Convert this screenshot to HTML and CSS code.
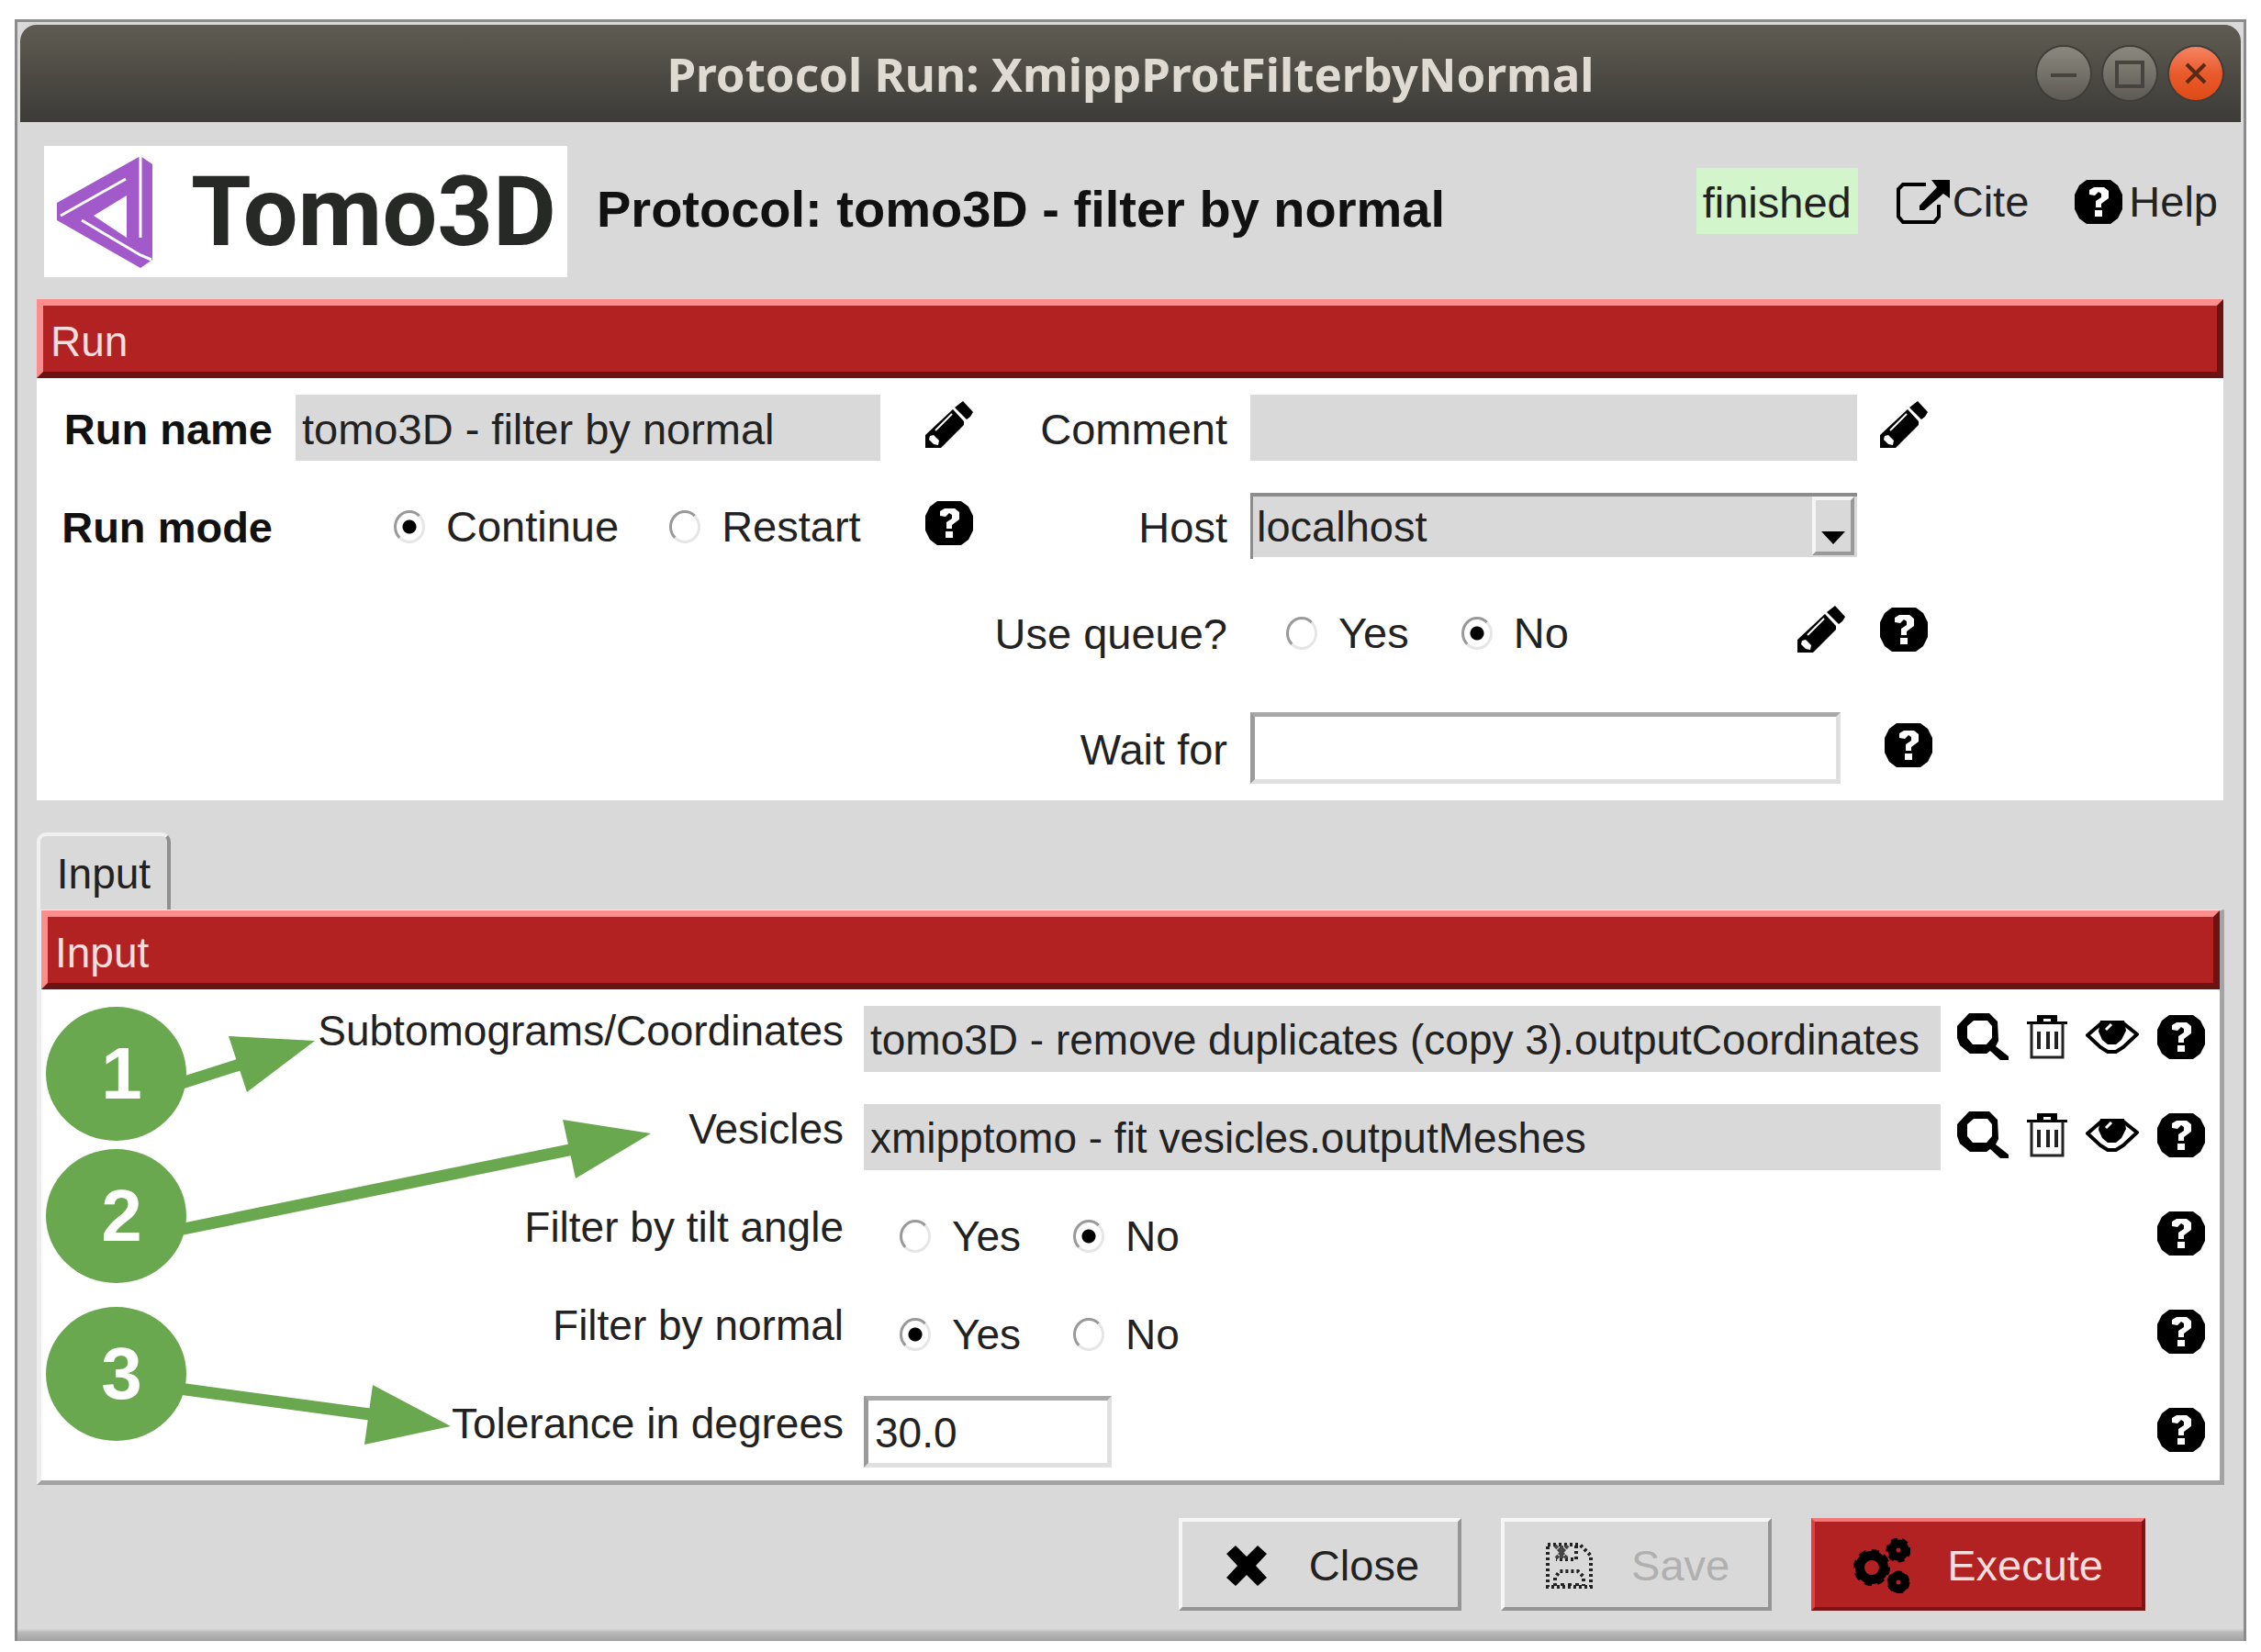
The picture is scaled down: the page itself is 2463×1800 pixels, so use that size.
FILE: index.html
```html
<!DOCTYPE html>
<html lang="en">
<head>
<meta charset="utf-8">
<title>Protocol Run: XmippProtFilterbyNormal</title>
<link rel="stylesheet" href="styles.css">
</head>
<body>
<svg class="sprite" aria-hidden="true">
  <symbol id="i-help" viewBox="0 0 52 48">
    <path d="M13 0h26l8 6 5 10v16l-5 10-8 6H13l-8-6-5-10V16l5-10z" fill="#000"/>
    <path d="M16 16v-5l5-3h11l5 4v8l-8 6v4h-6v-7l6-4v-4l-3-2-4 4z" fill="#fff"/>
    <path d="M22 33h8v7h-8z" fill="#fff"/>
  </symbol>
  <symbol id="i-pencil" viewBox="0 0 52 52">
    <path d="M41 0l11 12-3 5-4 3-13-13z M30 9l12 13v4L17 51H0V37z" fill="#000"/>
    <path d="M5 38l4-1 6 6-1 5-5-1-5-5z" fill="#fff"/>
    <path d="M29 14L11 32" stroke="#fff" stroke-width="2" fill="none"/>
  </symbol>
  <symbol id="i-search" viewBox="0 0 56 52">
    <path d="M13 0h22l9 9 1 21-3 6 14 11v4h-9L36 41l-4 3H14L3 35l-3-8V14z M18 8l-7 6v13l6 7h15l6-7V14l-5-6z" fill="#000" fill-rule="evenodd"/>
  </symbol>
  <symbol id="i-trash" viewBox="0 0 44 48">
    <path d="M11 7V0h22v7z M0 7h44v3H0z" fill="#000"/>
    <path d="M18 4h8v3h-8z" fill="#fff"/>
    <path d="M5 9v37h34V9" fill="none" stroke="#222" stroke-width="3"/>
    <path d="M13 18v19M23 18v19M32 18v19" stroke="#222" stroke-width="4"/>
  </symbol>
  <symbol id="i-eye" viewBox="0 0 58 36">
    <path d="M2 16L17 3h24l15 12-15 14-8 5h-9l-8-5z" fill="#fff" stroke="#000" stroke-width="4"/>
    <path d="M16 0h26l2 11-5 10-6 5h-9l-6-5-4-9z" fill="#000"/>
    <path d="M22 10l6-6" stroke="#fff" stroke-width="3"/>
  </symbol>
  <symbol id="i-cite" viewBox="0 0 58 48">
    <path d="M32 5H7L2 10v30l5 6h34l5-6V27" fill="none" stroke="#000" stroke-width="4"/>
    <path d="M38 0h20v20l-7-5-21 18h-5v-5l19-20z" fill="#000"/>
  </symbol>
  <symbol id="i-close" viewBox="0 0 44 44">
    <path d="M10 0l12 12L34 0l10 9-12 13 12 13-10 9-12-12-12 12L0 35l12-13L0 9z" fill="#000"/>
  </symbol>
  <symbol id="i-save" viewBox="0 0 52 50">
    <path d="M3 2h35l12 12v34H3z M34 3v15H12 M11 47V38l5-7h20l6 6v10 M19 47v-6M27 47v-6M35 47v-6" fill="none" stroke="#222" stroke-width="4" stroke-dasharray="3 3"/>
    <path d="M11 3l13 14M25 3L12 17M18 3v14" stroke="#444" stroke-width="4" stroke-dasharray="4 1"/>
  </symbol>
  <symbol id="i-gears" viewBox="0 0 62 60">
    <g fill="none" stroke="#000">
      <circle cx="20" cy="32" r="13" stroke-width="10"/>
      <circle cx="20" cy="32" r="18" stroke-width="4" stroke-dasharray="8 6"/>
      <circle cx="49" cy="13" r="7" stroke-width="9"/>
      <circle cx="49" cy="13" r="12" stroke-width="3" stroke-dasharray="7 5"/>
      <circle cx="49" cy="48" r="7" stroke-width="9"/>
      <circle cx="49" cy="48" r="11" stroke-width="3" stroke-dasharray="7 5"/>
    </g>
  </symbol>
</svg>

<main class="window">
  <header class="titlebar">
    <h1 class="titlebar-text">Protocol Run: XmippProtFilterbyNormal</h1>
    <div class="titlebar-buttons">
      <button class="wm" type="button" aria-label="Minimize"><svg viewBox="0 0 58 58"><path d="M15 31h28" stroke="#45433d" stroke-width="4"/></svg></button>
      <button class="wm" type="button" aria-label="Maximize"><svg viewBox="0 0 58 58"><path d="M15 17h28v26H15z" fill="none" stroke="#45433d" stroke-width="4"/></svg></button>
      <button class="wm wm-close" type="button" aria-label="Close window"><svg viewBox="0 0 58 58"><path d="M19 19l20 20M39 19L19 39" stroke="#5a2b14" stroke-width="4"/></svg></button>
    </div>
  </header>

  <div class="masthead">
    <div class="logo">
      <svg class="logo-mark" viewBox="0 0 104 122" aria-hidden="true">
        <path d="M91 0l13 9v104l-13 9L0 70V51z" fill="#a259c9"/>
        <path d="M40 65l36-22v46z" fill="#fff"/>
        <path d="M91 0v88M4 65L75 25M27 70l64 38 12 5M91 89V66" fill="none" stroke="#fff" stroke-width="3"/>
      </svg>
      <span class="logo-text">Tomo3D</span>
    </div>
    <h2 class="protocol">Protocol: tomo3D - filter by normal</h2>
    <div class="masthead-side">
      <span class="status">finished</span>
      <a class="link" href="#cite"><svg class="ic-cite"><use href="#i-cite"/></svg>Cite</a>
      <a class="link link-help" href="#help"><svg class="ic-help"><use href="#i-help"/></svg>Help</a>
    </div>
  </div>

  <section class="run">
    <h3 class="bar">Run</h3>
    <div class="run-body">
      <div class="run-col">
        <div class="row row-left">
          <label class="label strong" for="run-name">Run name</label>
          <input class="entry flat" id="run-name" type="text" value="tomo3D - filter by normal">
          <button class="icon" type="button" aria-label="Edit run name"><svg class="ic-pencil"><use href="#i-pencil"/></svg></button>
        </div>
        <div class="row row-left">
          <span class="label strong">Run mode</span>
          <div class="radios radios-mode">
            <label class="radio"><input type="radio" name="mode" checked>Continue</label>
            <label class="radio"><input type="radio" name="mode">Restart</label>
          </div>
          <button class="icon" type="button" aria-label="Run mode help"><svg class="ic-help"><use href="#i-help"/></svg></button>
        </div>
      </div>
      <div class="run-col">
        <div class="row row-right">
          <label class="label" for="comment">Comment</label>
          <input class="entry flat" id="comment" type="text">
          <button class="icon" type="button" aria-label="Edit comment"><svg class="ic-pencil"><use href="#i-pencil"/></svg></button>
        </div>
        <div class="row row-right">
          <label class="label" for="host">Host</label>
          <div class="combo">
            <select id="host"><option>localhost</option></select>
            <span class="combo-arrow"><svg viewBox="0 0 26 14"><path d="M0 0h26L13 14z"/></svg></span>
          </div>
        </div>
        <div class="row row-right row-queue">
          <span class="label">Use queue?</span>
          <div class="radios">
            <label class="radio"><input type="radio" name="queue">Yes</label>
            <label class="radio"><input type="radio" name="queue" checked>No</label>
            <button class="icon icon-end" type="button" aria-label="Edit queue"><svg class="ic-pencil"><use href="#i-pencil"/></svg></button>
          </div>
          <button class="icon" type="button" aria-label="Queue help"><svg class="ic-help"><use href="#i-help"/></svg></button>
        </div>
        <div class="row row-right row-wait">
          <label class="label" for="wait">Wait for</label>
          <input class="entry sunken" id="wait" type="text">
          <button class="icon" type="button" aria-label="Wait for help"><svg class="ic-help"><use href="#i-help"/></svg></button>
        </div>
      </div>
    </div>
  </section>

  <button class="tab" type="button">Input</button>
  <section class="page">
    <h3 class="bar">Input</h3>
    <div class="row row-input">
      <label class="label" for="coords">Subtomograms/Coordinates</label>
      <input class="entry flat" id="coords" type="text" value="tomo3D - remove duplicates (copy 3).outputCoordinates">
      <div class="tools">
        <button class="icon" type="button" aria-label="Search"><svg class="ic-search"><use href="#i-search"/></svg></button>
        <button class="icon" type="button" aria-label="Delete"><svg class="ic-trash"><use href="#i-trash"/></svg></button>
        <button class="icon" type="button" aria-label="View"><svg class="ic-eye"><use href="#i-eye"/></svg></button>
        <button class="icon" type="button" aria-label="Help"><svg class="ic-help"><use href="#i-help"/></svg></button>
      </div>
    </div>
    <div class="row row-input">
      <label class="label" for="vesicles">Vesicles</label>
      <input class="entry flat" id="vesicles" type="text" value="xmipptomo - fit vesicles.outputMeshes">
      <div class="tools">
        <button class="icon" type="button" aria-label="Search"><svg class="ic-search"><use href="#i-search"/></svg></button>
        <button class="icon" type="button" aria-label="Delete"><svg class="ic-trash"><use href="#i-trash"/></svg></button>
        <button class="icon" type="button" aria-label="View"><svg class="ic-eye"><use href="#i-eye"/></svg></button>
        <button class="icon" type="button" aria-label="Help"><svg class="ic-help"><use href="#i-help"/></svg></button>
      </div>
    </div>
    <div class="row row-input">
      <span class="label">Filter by tilt angle</span>
      <div class="radios">
        <label class="radio"><input type="radio" name="tilt">Yes</label>
        <label class="radio"><input type="radio" name="tilt" checked>No</label>
      </div>
      <div class="tools"><button class="icon" type="button" aria-label="Help"><svg class="ic-help"><use href="#i-help"/></svg></button></div>
    </div>
    <div class="row row-input">
      <span class="label">Filter by normal</span>
      <div class="radios">
        <label class="radio"><input type="radio" name="normal" checked>Yes</label>
        <label class="radio"><input type="radio" name="normal">No</label>
      </div>
      <div class="tools"><button class="icon" type="button" aria-label="Help"><svg class="ic-help"><use href="#i-help"/></svg></button></div>
    </div>
    <div class="row row-input">
      <label class="label" for="tolerance">Tolerance in degrees</label>
      <input class="entry sunken short" id="tolerance" type="text" value="30.0">
      <div class="tools"><button class="icon" type="button" aria-label="Help"><svg class="ic-help"><use href="#i-help"/></svg></button></div>
    </div>

    <div class="notes">
      <svg class="arrows" viewBox="0 0 720 530" aria-hidden="true">
        <g stroke="#6aa84f" stroke-width="13">
          <path d="M150 103L222 80M150 262L580 174M150 435L365 464"/>
        </g>
        <g fill="#6aa84f">
          <path d="M204 51l94 5-74 56z"/>
          <path d="M568 142l96 15-82 49z"/>
          <path d="M361 431l85 45-94 20z"/>
        </g>
      </svg>
      <span class="badge badge-1">1</span>
      <span class="badge badge-2">2</span>
      <span class="badge badge-3">3</span>
    </div>
  </section>

  <footer class="actions">
    <button class="btn" type="button"><svg class="ic-close"><use href="#i-close"/></svg>Close</button>
    <button class="btn" type="button" disabled><svg class="ic-save"><use href="#i-save"/></svg>Save</button>
    <button class="btn btn-run" type="button"><svg class="ic-gears"><use href="#i-gears"/></svg>Execute</button>
  </footer>
</main>
</body>
</html>
```
FILE: styles.css
```css
* {
  box-sizing: border-box;
}

body {
  margin: 0;
  padding: 21px 16px 12px;
  background: #fff;
  color: #222;
  font: 47px/52px "Liberation Sans", Arial, sans-serif;
}

h1, h2, h3 {
  margin: 0;
  font-weight: normal;
}

button, input, select {
  margin: 0;
  padding: 0;
  border: 0;
  border-radius: 0;
  background: none;
  color: inherit;
  font: inherit;
}

svg {
  display: block;
}

.sprite {
  position: absolute;
  width: 0;
  height: 0;
}

/* window frame */
.window {
  padding: 3px;
  border: 3px solid #8b8b8b;
  border-bottom-width: 0;
  background: #d9d9d9;
}

.titlebar {
  display: grid;
  grid-template-columns: 1fr auto 1fr;
  align-items: center;
  height: 106px;
  padding-right: 20px;
  border-radius: 18px 18px 0 0;
  background: linear-gradient(#5f5d52, #4d4b44 50%, #3c3b37);
}

.titlebar-text {
  grid-column: 2;
  padding-left: 20px;
  color: #dfdbd2;
  font: bold 51px/56px "Noto Sans", "Open Sans", sans-serif;
}

.titlebar-buttons {
  display: flex;
  justify-content: flex-end;
  gap: 14px;
}

.wm {
  width: 58px;
  height: 58px;
  border-radius: 50%;
  background: linear-gradient(#8b897f, #5c5a53);
  box-shadow: 0 0 0 2px #3f3e39;
}

.wm-close {
  background: linear-gradient(#f58463, #e95b2c 50%, #df4a16);
}

/* logo, protocol name and links */
.masthead {
  display: flex;
  align-items: center;
  padding: 26px 25px 24px 26px;
}

.logo {
  display: flex;
  align-items: center;
  width: 570px;
  height: 143px;
  padding-left: 14px;
  background: #fff;
}

.logo-mark {
  width: 104px;
  height: 122px;
}

.logo-text {
  margin-left: 42px;
  color: #262926;
  font: bold 106px/120px Roboto, sans-serif;
}

.protocol {
  margin-left: 32px;
  padding-bottom: 6px;
  color: #111;
  font-size: 56px;
  font-weight: bold;
}

.masthead-side {
  display: flex;
  align-items: center;
  align-self: flex-start;
  margin-left: auto;
  padding-top: 24px;
}

.status {
  padding: 12px 7px 8px;
  background: #d2f5cb;
}

.link {
  display: flex;
  align-items: center;
  gap: 3px;
  margin-left: 42px;
  padding-top: 2px;
  color: inherit;
  text-decoration: none;
}

.link-help {
  gap: 7px;
  margin-left: 50px;
}

/* raised red section headings */
.bar {
  height: 86px;
  padding: 13px 0 0 8px;
  border: 7px solid;
  border-color: #fb8d8d #6b1212 #6b1212 #fb8d8d;
  background: #b22222;
  color: #f3dede;
  font-size: 46px;
}

.run {
  margin: 0 19px 0 18px;
  background: #fff;
}

.run-body {
  display: grid;
  grid-template-columns: 1020fr 1362fr;
}

.row {
  display: grid;
  align-items: center;
  min-height: 107px;
}

.row-left {
  grid-template-columns: 257px 1fr 56px;
  column-gap: 25px;
}

.row-left > .icon {
  justify-self: end;
}

.row-left > :nth-child(2) {
  width: calc(100% - 20px);
}

.row-right {
  grid-template-columns: 277px 1fr 374px;
  column-gap: 25px;
}

.row-queue {
  min-height: 126px;
}

.row-wait {
  grid-template-columns: 277px 1fr 369px;
  column-gap: 25px;
  min-height: 120px;
  padding-top: 6px;
}

.row-wait > .entry {
  width: calc(100% - 23px);
}

.label {
  padding-top: 4px;
  text-align: right;
}

.strong {
  color: #111;
  font-weight: bold;
}

.entry {
  width: 100%;
  min-width: 0;
  height: 72px;
  padding: 3px 7px 0;
}

.flat {
  background: #d9d9d9;
}

.sunken {
  height: 78px;
  border: 5px solid;
  border-color: #a9a9a9 #e0e0e0 #e0e0e0 #9b9b9b;
  background: #fff;
}

.icon {
  display: block;
  width: max-content;
  padding-bottom: 6px;
}

.ic-help { width: 52px; height: 48px; }
.ic-pencil { width: 52px; height: 52px; }
.ic-search { width: 56px; height: 52px; }
.ic-trash { width: 44px; height: 48px; }
.ic-eye { width: 58px; height: 36px; }
.ic-cite { width: 58px; height: 48px; }
.ic-close { width: 44px; height: 44px; }
.ic-save { width: 52px; height: 50px; }
.ic-gears { width: 62px; height: 60px; }

.radios {
  display: flex;
  align-items: center;
  gap: 57px;
  padding-left: 39px;
}

.radios-mode {
  gap: 55px;
  padding-left: 107px;
}

.icon-end {
  margin-left: auto;
  margin-right: 13px;
}

.radio {
  display: flex;
  align-items: center;
  gap: 23px;
  padding-top: 2px;
}

.radio input {
  appearance: none;
  width: 34px;
  height: 36px;
  border: 3px solid;
  border-color: #999 #e6e6e6 #e6e6e6 #999;
  border-radius: 50%;
}

.radio input:checked {
  background: radial-gradient(circle, #000 7px, transparent 8px);
}

/* drop-down with its raised arrow button */
.combo {
  position: relative;
  height: 72px;
  border-top: 4px solid #8c8c8c;
  border-left: 3px solid #8c8c8c;
}

.combo select {
  appearance: none;
  width: 100%;
  height: 66px;
  padding: 0 0 0 4px;
  background: #d9d9d9;
}

.combo-arrow {
  position: absolute;
  top: 0;
  right: 3px;
  width: 46px;
  height: 64px;
  padding: 34px 0 0 6px;
  border: 4px solid;
  border-color: #f4f4f4 #999 #999 #f4f4f4;
  background: #d9d9d9;
  pointer-events: none;
}

.combo-arrow svg {
  width: 26px;
  height: 14px;
}

/* notebook tab and page */
.tab {
  display: block;
  width: 146px;
  height: 84px;
  margin: 35px 0 0 18px;
  padding-top: 2px;
  border: 4px solid;
  border-color: #f0f0f0 #8f8f8f transparent #f0f0f0;
  border-bottom-width: 0;
  border-radius: 10px 10px 0 0;
  font-size: 46px;
}

.page {
  position: relative;
  margin: 0 18px;
  border: 5px solid;
  border-color: #ededed #a3a3a3 #a3a3a3 #ededed;
  border-top-width: 1px;
  background: #fff;
  font-size: 46px;
}

.row-input {
  grid-template-columns: 874px 1fr 304px;
}

.row-input > .label {
  padding: 0 0 18px;
}

.row-input > :nth-child(2) {
  width: calc(100% - 22px);
  margin-left: 22px;
}

.row-input > .short {
  width: 270px;
}

.tools {
  display: flex;
  align-items: center;
  justify-content: flex-end;
  gap: 20px;
  padding-right: 16px;
}

.tools .icon {
  padding-bottom: 3px;
}

/* numbered notes drawn over the form */
.notes {
  position: absolute;
  top: 86px;
  left: 0;
  width: 720px;
  height: 530px;
  pointer-events: none;
}

.arrows {
  width: 720px;
  height: 530px;
}

.badge {
  position: absolute;
  left: 5px;
  width: 153px;
  height: 146px;
  padding-left: 12px;
  border-radius: 50%;
  background: #6aa84f;
  color: #fff;
  font-size: 80px;
  font-weight: bold;
  line-height: 146px;
  text-align: center;
}

.badge-1 { top: 19px; }
.badge-2 { top: 174px; }
.badge-3 { top: 346px; }

.actions {
  display: flex;
  justify-content: flex-end;
  gap: 43px;
  margin: 0 -3px -3px;
  padding: 36px 107px 33px 0;
  background: linear-gradient(to top, #a0a0a0, #bcbcbc 10px, #d9d9d9 13px);
}

.btn {
  display: flex;
  align-items: center;
  gap: 46px;
  height: 101px;
  padding: 3px 42px 0 48px;
  border: 4px solid;
  border-color: #f6f6f6 #959595 #959595 #f6f6f6;
  background: #d9d9d9;
}

.btn:disabled {
  gap: 42px;
  padding-left: 44px;
  color: #b0b0b0;
}

.btn-run {
  gap: 40px;
  padding-left: 42px;
  border-color: #f07a7a #7a1515 #7a1515 #e04040;
  background: #b22222;
  color: #f3dede;
}
```
